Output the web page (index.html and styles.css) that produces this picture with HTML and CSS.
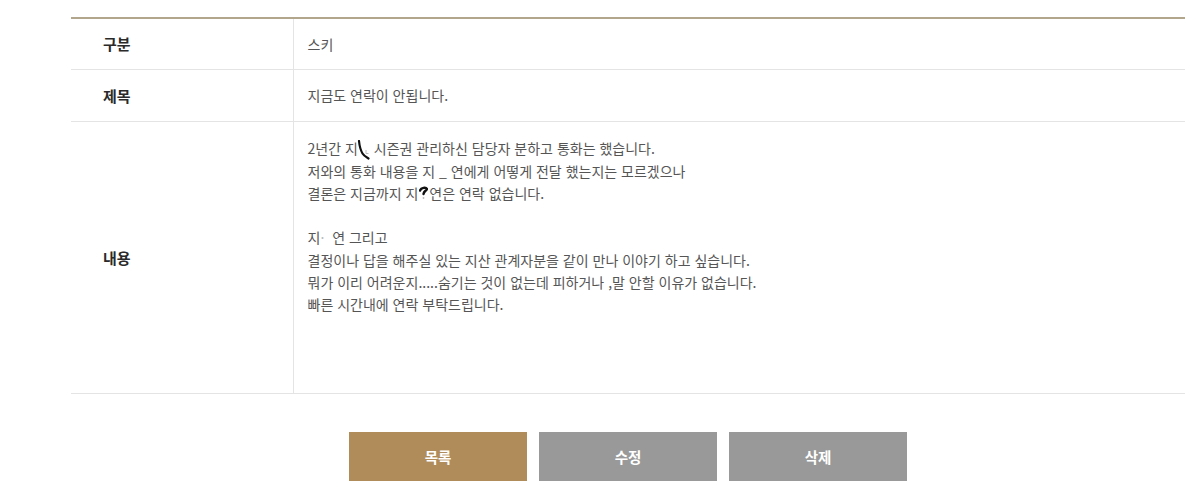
FILE: index.html
```html
<!DOCTYPE html>
<html lang="ko">
<head>
<meta charset="utf-8">
<title>상세보기</title>
<link rel="stylesheet" href="styles.css">
</head>
<body>
<div class="page">
  <table class="view">
    <tr class="row-short">
      <th>구분</th>
      <td>스키</td>
    </tr>
    <tr class="row-short">
      <th>제목</th>
      <td>지금도 연락이 안됩니다.</td>
    </tr>
    <tr class="row-content">
      <th>내용</th>
      <td>
        <div class="content">
          <p>2년간 지<svg class="mark m1" width="13" height="20" viewBox="0 0 13 20"><path d="M2 1 C2.5 6 3.5 10 5.5 13.5 C7 16 9 17 11.5 18.5" stroke="#111" stroke-width="2.2" fill="none" stroke-linecap="round"/><path d="M9 10 L9 13.5 L11.5 13.5" stroke="#bbb" stroke-width="1" fill="none"/></svg> 시즌권 관리하신 담당자 분하고 통화는 했습니다.</p>
          <p>저와의 통화 내용을 지 _ 연에게 어떻게 전달 했는지는 모르겠으나</p>
          <p>결론은 지금까지 지 <svg class="mark m2" width="9" height="16" viewBox="0 0 9 16"><path d="M1 4.5 C2 1.5 7 1 8 3 C7 5 5 5 4.5 8" stroke="#111" stroke-width="2.4" fill="none" stroke-linecap="round"/><circle cx="4.5" cy="12" r="0.9" fill="#bbb"/></svg>연은 연락 없습니다.</p>
          <p class="blank">&nbsp;</p>
          <p>지<span class="faint">·</span>&nbsp;&nbsp;연 그리고</p>
          <p>결정이나 답을 해주실 있는 지산 관계자분을 같이 만나 이야기 하고 싶습니다.</p>
          <p>뭐가 이리 어려운지.....숨기는 것이 없는데 피하거나 ,말 안할 이유가 없습니다.</p>
          <p>빠른 시간내에 연락 부탁드립니다.</p>
        </div>
      </td>
    </tr>
  </table>
  <div class="buttons">
    <a class="btn btn-list" href="#">목록</a>
    <a class="btn btn-gray" href="#">수정</a>
    <a class="btn btn-gray" href="#">삭제</a>
  </div>
</div>
</body>
</html>
```

FILE: styles.css
```css
* { box-sizing: border-box; }
html, body { margin: 0; padding: 0; background: #fff; }
body {
  font-family: "Noto Sans CJK KR", "Noto Sans", sans-serif;
  color: #555;
}
.page {
  width: 1114px;
  margin-left: 71px;
  padding-top: 17px;
}
.view {
  width: 100%;
  border-collapse: collapse;
  border-top: 2px solid #b2a78c;
}
.view th, .view td {
  border-bottom: 1px solid #e4e4e4;
  padding: 0;
}
.view th {
  width: 222px;
  text-align: left;
  padding-left: 32px;
  font-size: 15px;
  font-weight: 700;
  color: #2a2a2a;
  border-right: 1px solid #e4e4e4;
  vertical-align: middle;
}
.view td {
  padding-left: 14px;
  font-size: 14px;
  color: #555;
}
.row-short th, .row-short td { height: 52px; }
.row-short:first-child th, .row-short:first-child td { height: 51px; }
.row-content td {
  height: 272px;
  vertical-align: top;
}
.content {
  padding-top: 15px;
}
.content p {
  margin: 0;
  line-height: 22.3px;
  white-space: nowrap;
}
.mark { display: inline-block; vertical-align: -6px; margin-left: -1px; }
.m2 { vertical-align: -3px; margin: 0 1px 0 -3px; }
.faint { color: #bbb; }
.buttons {
  display: flex;
  justify-content: center;
  gap: 12px;
  margin-top: 38px;
}
.btn {
  display: flex;
  align-items: center;
  justify-content: center;
  width: 178px;
  height: 49px;
  color: #fff;
  font-size: 14.5px;
  font-weight: 700;
  text-decoration: none;
}
.btn-list { background: #b08c5a; }
.btn-gray { background: #999999; }
```
